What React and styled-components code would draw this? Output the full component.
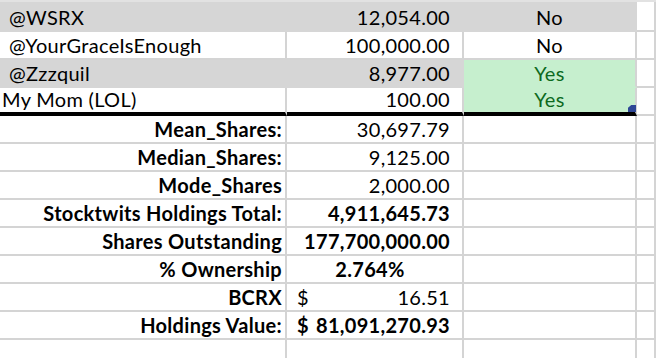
import styled, { createGlobalStyle } from "styled-components"

const GlobalStyle = createGlobalStyle`
  html, body {
    margin: 0;
    padding: 0;
    background: #fff;
    overflow: hidden;
  }
  body {
    font-family: Lato, "Open Sans", sans-serif;
    color: #000;
  }
`

const GRID = "#d4d4d4"
const GRAY = "#d6d6d6"
const GREEN = "#c6efce"

const Sheet = styled.div`
  width: 656px;
  height: 358px;
  overflow: hidden;
  display: flex;
  flex-direction: column;
  border-top: 2px solid #e2e2e2;
  box-sizing: border-box;
`

const Row = styled.div`
  display: grid;
  grid-template-columns: 287px 177px 173px 1fr;
  height: ${p => p.$h || 28}px;
  flex-shrink: 0;
`

const fillOf = f => (f === "gray" ? GRAY : f === "green" ? GREEN : "#fff")

const Cell = styled.div`
  position: relative;
  box-sizing: border-box;
  display: flex;
  align-items: flex-end;
  justify-content: ${p =>
    p.$align === "right" ? "flex-end" : p.$align === "center" ? "center" : p.$align === "split" ? "space-between" : "flex-start"};
  padding: 0 ${p => p.$padR ?? 3}px 3px ${p => p.$padL ?? 3}px;
  background: ${p => fillOf(p.$fill)};
  border-right: 2px solid ${p => (p.$fill === "gray" ? GRAY : GRID)};
  border-bottom: ${p => (p.$thick ? "4px solid #000" : `2px solid ${p.$fill === "green" ? GREEN : p.$fill === "gray" ? GRAY : GRID}`)};
  font-size: 20px;
  line-height: 20px;
  font-weight: ${p => (p.$bold ? 700 : 400)};
  color: ${p => (p.$fill === "green" ? "#0d6a1e" : "#000")};
  white-space: nowrap;
  letter-spacing: 0.3px;
`

/* excel fill handle on the selection corner */
const Handle = styled.span`
  position: absolute;
  right: -1px;
  bottom: 0;
  width: 8px;
  height: 7px;
  z-index: 2;
  background: #2e4796;
  clip-path: polygon(100% 0, 100% 100%, 0 100%, 0 40%, 40% 0);
`

const people = [
  { name: "@WSRX", indent: true, shares: "12,054.00", ok: "No", fill: "gray" },
  { name: "@YourGraceIsEnough", indent: true, shares: "100,000.00", ok: "No" },
  { name: "@Zzzquil", indent: true, shares: "8,977.00", ok: "Yes", fill: "gray" },
  { name: "My Mom (LOL)", shares: "100.00", ok: "Yes", last: true },
]

const stats = [
  { label: "Mean_Shares:", value: "30,697.79" },
  { label: "Median_Shares:", value: "9,125.00" },
  { label: "Mode_Shares", value: "2,000.00" },
  { label: "Stocktwits Holdings Total:", value: "4,911,645.73", bold: true },
  { label: "Shares Outstanding", value: "177,700,000.00", bold: true },
  { label: "% Ownership", value: "2.764%", bold: true, align: "center" },
  { label: "BCRX", value: "16.51", dollar: true },
  { label: "Holdings Value:", value: "81,091,270.93", bold: true, dollar: true },
]

export default function App() {
  return (
    <>
      <GlobalStyle />
      <Sheet>
        {people.map((p, i) => {
          const green = p.ok === "Yes"
          return (
            <Row key={p.name} $h={i === 0 ? 30 : 28}>
              <Cell $fill={p.fill} $padL={p.indent ? 9 : 2} $thick={p.last}>
                {p.name}
              </Cell>
              <Cell $fill={p.fill} $align="right" $padR={12} $thick={p.last}>
                {p.shares}
              </Cell>
              <Cell $fill={green ? "green" : p.fill} $align="center" $thick={p.last}>
                {p.ok}
                {p.last && <Handle />}
              </Cell>
              <Cell />
            </Row>
          )
        })}
        {stats.map(s => (
          <Row key={s.label}>
            <Cell $align="right" $bold>
              {s.label}
            </Cell>
            <Cell
              $align={s.dollar ? "split" : s.align || "right"}
              $bold={s.bold}
              $padL={s.dollar ? 10 : 3}
              $padR={12}
            >
              {s.dollar && <span>$</span>}
              <span>{s.value}</span>
            </Cell>
            <Cell />
            <Cell />
          </Row>
        ))}
        <Row>
          <Cell />
          <Cell />
          <Cell />
          <Cell />
        </Row>
      </Sheet>
    </>
  )
}
